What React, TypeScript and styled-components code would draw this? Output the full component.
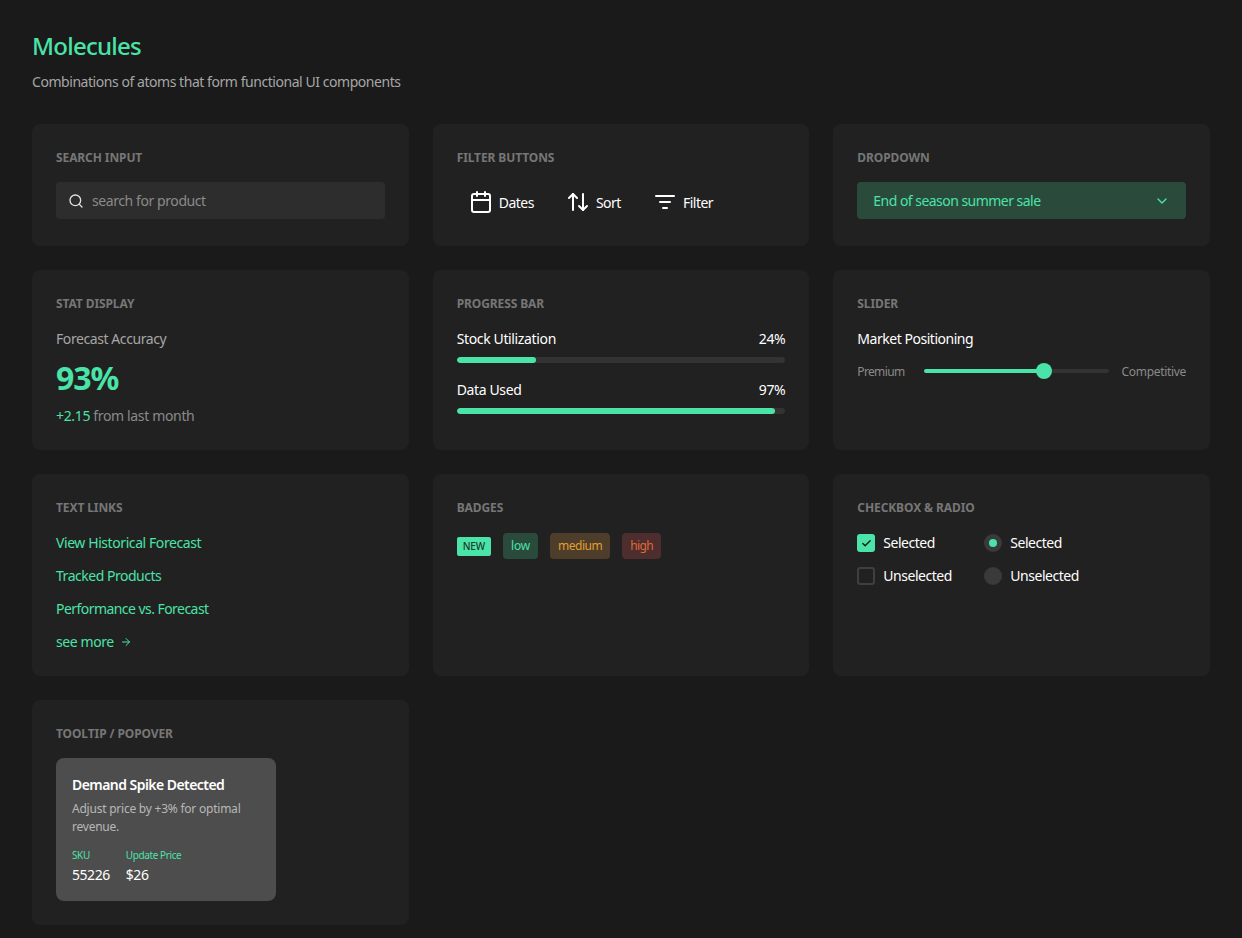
import React from "react";
import styled, { createGlobalStyle } from "styled-components";
import { Search, Calendar, ArrowUpDown, ChevronDown, ArrowRight, Check } from "lucide-react";

const Global = createGlobalStyle`
  html, body { margin: 0; padding: 0; background: #1a1a1a; overflow: hidden; height: 938px; }
  body { font-family: "Noto Sans", "Open Sans", sans-serif; color: #fff; }
`;
const Page = styled.div`padding: 32px;`;
const Title = styled.h1`margin: 0 0 10px; font-size: 24px; line-height: 28px; padding-bottom: 1px; font-weight: 500; color: #4ae3a8; letter-spacing: -0.75px;`;
const Subtitle = styled.p`margin: 0 0 31px; font-size: 14px; line-height: 22px; color: #a6a6a6; letter-spacing: -0.45px;`;
const Grid = styled.div`display: grid; grid-template-columns: repeat(3, 1fr); gap: 24px;`;
const Card = styled.section`background: #212121; border-radius: 8px; padding: 24px;`;
const Label = styled.h3`margin: 0 0 14px; font-size: 12px; line-height: 20px; font-weight: 700; color: #767676; text-transform: uppercase; letter-spacing: -0.1px;`;
const SearchBox = styled.div`display: flex; align-items: center; gap: 8px; height: 37px; padding: 0 12px; background: #2d2d2d; border-radius: 4px; color: #e0e0e0;`;
const Placeholder = styled.span`font-size: 14px; color: #8a8a8a; letter-spacing: -0.42px;`;
const FilterRow = styled.div`display: flex; gap: 8px;`;
const FilterBtn = styled.div`display: flex; align-items: center; gap: 6px; padding: 8px 12px; font-size: 14px; line-height: 20px; color: #fff; letter-spacing: -0.5px;`;
const FilterText = styled.span`padding-top: 2px;`;
const Select = styled.div`display: flex; align-items: center; justify-content: space-between; height: 37px; padding: 0 16px; background: #2a4a3c; border-radius: 4px; color: #4ae3a8; font-size: 14px; letter-spacing: -0.53px;`;
const StatLabel = styled.div`font-size: 14px; line-height: 22px; color: #a6a6a6; letter-spacing: -0.42px;`;
const StatValue = styled.div`margin: 8px 0; font-size: 32px; line-height: 40px; font-weight: 700; color: #4ae3a8; letter-spacing: -1px;`;
const StatDelta = styled.div`font-size: 14px; line-height: 20px; color: #8a8a8a; letter-spacing: -0.35px; span { color: #4ae3a8; }`;
const ProgressItem = styled.div`& + & { margin-top: 16px; }`;
const ProgressHead = styled.div`display: flex; justify-content: space-between; font-size: 14px; line-height: 22px; letter-spacing: -0.36px; margin-bottom: 7px;`;
const Track = styled.div`height: 6px; background: #333; border-radius: 3px; overflow: hidden;`;
const Fill = styled.div`height: 100%; background: #4ae3a8; border-radius: 3px;`;
const SliderTitle = styled.div`font-size: 14px; line-height: 22px; letter-spacing: -0.47px; margin-bottom: 12px;`;
const SliderRow = styled.div`display: flex; align-items: center; font-size: 12px; line-height: 20px; color: #8a8a8a;`;
const SliderStart = styled.span`letter-spacing: -0.65px; margin-right: 20px;`;
const SliderEnd = styled.span`letter-spacing: -0.32px; margin-left: 13px;`;
const SliderTrack = styled.div`position: relative; flex: 1; height: 4px; border-radius: 2px; background: #333; top: -1px;`;
const SliderFill = styled.div`height: 100%; background: #4ae3a8; border-radius: 2px;`;
const Thumb = styled.div`position: absolute; top: -6px; width: 16px; height: 16px; margin-left: -8px; border-radius: 50%; background: #4ae3a8;`;
const Links = styled.div`display: flex; flex-direction: column; gap: 13px; padding-top: 1px;`;
const TextLink = styled.a<{ $ls?: number }>`display: flex; align-items: center; gap: 6px; font-size: 14px; line-height: 20px; color: #4ae3a8; letter-spacing: ${p => p.$ls ?? -0.42}px;`;
const Badges = styled.div`display: flex; align-items: center; gap: 12px; padding-top: 1px;`;
const New = styled.span`padding: 0 6px; height: 19px; line-height: 19px; background: #4ae3a8; color: #1a3a2c; font-size: 10px; font-weight: 500; border-radius: 2px; letter-spacing: -0.1px;`;
const Badge = styled.span<{ $bg: string; $fg: string; $ls: number }>`height: 26px; line-height: 26px; padding: 0 8px; border-radius: 4px; font-size: 12px; background: ${p => p.$bg}; color: ${p => p.$fg}; letter-spacing: ${p => p.$ls}px;`;
const Choices = styled.div`display: grid; grid-template-columns: 127px auto; row-gap: 13px; justify-content: start; padding-top: 1px;`;
const Choice = styled.div`display: flex; align-items: center; gap: 8px; font-size: 14px; line-height: 20px; letter-spacing: -0.47px;`;
const Box = styled.span<{ $on?: boolean }>`display: flex; align-items: center; justify-content: center; box-sizing: border-box; width: 18px; height: 18px; border-radius: 3px; color: #1a1a1a; background: ${p => (p.$on ? "#4ae3a8" : "transparent")}; border: ${p => (p.$on ? "none" : "2px solid #3f3f3f")};`;
const Radio = styled.span<{ $on?: boolean }>`display: flex; align-items: center; justify-content: center; width: 18px; height: 18px; border-radius: 50%; background: #3a3a3a; &::after { content: ""; width: 8px; height: 8px; border-radius: 50%; background: ${p => (p.$on ? "#4ae3a8" : "transparent")}; }`;
const Pop = styled.div`width: 220px; box-sizing: border-box; padding: 16px 16px 15px; background: #4d4d4d; border-radius: 8px;`;
const PopTitle = styled.div`font-size: 14px; line-height: 22px; font-weight: 600; color: #fff; letter-spacing: -0.55px; margin-bottom: 4px;`;
const PopText = styled.div`font-size: 12px; line-height: 18px; color: #b8b8b8; letter-spacing: -0.23px; margin-bottom: 10px;`;
const PopFields = styled.div`display: flex; gap: 16px;`;
const PopKey = styled.div`font-size: 10px; line-height: 18px; color: #4ae3a8; letter-spacing: -0.4px;`;
const PopVal = styled.div`font-size: 14px; line-height: 22px; color: #fff; letter-spacing: -0.45px;`;

const FilterLines = () => (
  <svg width="24" height="24" viewBox="0 0 24 24" fill="none" stroke="currentColor" strokeWidth="2" strokeLinecap="round">
    <path d="M3 6h18M7 12h10M10 18h4" />
  </svg>
);

export default function App() {
  return (
    <Page>
      <Global />
      <Title>Molecules</Title>
      <Subtitle>Combinations of atoms that form functional UI components</Subtitle>
      <Grid>
        <Card>
          <Label>Search Input</Label>
          <SearchBox><Search size={16} /><Placeholder>search for product</Placeholder></SearchBox>
        </Card>
        <Card>
          <Label>Filter Buttons</Label>
          <FilterRow>
            <FilterBtn><Calendar size={24} strokeWidth={2} /><FilterText>Dates</FilterText></FilterBtn>
            <FilterBtn><ArrowUpDown size={24} strokeWidth={2} /><FilterText>Sort</FilterText></FilterBtn>
            <FilterBtn><FilterLines /><FilterText>Filter</FilterText></FilterBtn>
          </FilterRow>
        </Card>
        <Card>
          <Label>Dropdown</Label>
          <Select>End of season summer sale<ChevronDown size={16} /></Select>
        </Card>
        <Card>
          <Label>Stat Display</Label>
          <StatLabel>Forecast Accuracy</StatLabel>
          <StatValue>93%</StatValue>
          <StatDelta><span>+2.15</span> from last month</StatDelta>
        </Card>
        <Card>
          <Label>Progress Bar</Label>
          <ProgressItem>
            <ProgressHead><span>Stock Utilization</span><span>24%</span></ProgressHead>
            <Track><Fill style={{ width: "24%" }} /></Track>
          </ProgressItem>
          <ProgressItem>
            <ProgressHead><span>Data Used</span><span>97%</span></ProgressHead>
            <Track><Fill style={{ width: "97%" }} /></Track>
          </ProgressItem>
        </Card>
        <Card>
          <Label>Slider</Label>
          <SliderTitle>Market Positioning</SliderTitle>
          <SliderRow>
            <SliderStart>Premium</SliderStart>
            <SliderTrack><SliderFill style={{ width: "65%" }} /><Thumb style={{ left: "65%" }} /></SliderTrack>
            <SliderEnd>Competitive</SliderEnd>
          </SliderRow>
        </Card>
        <Card>
          <Label>Text Links</Label>
          <Links>
            <TextLink>View Historical Forecast</TextLink>
            <TextLink $ls={-0.48}>Tracked Products</TextLink>
            <TextLink $ls={-0.55}>Performance vs. Forecast</TextLink>
            <TextLink>see more <ArrowRight size={12} /></TextLink>
          </Links>
        </Card>
        <Card>
          <Label>Badges</Label>
          <Badges>
            <New>NEW</New>
            <Badge $bg="#2a4a3c" $fg="#4ae3a8" $ls={-0.2}>low</Badge>
            <Badge $bg="#4d3d2a" $fg="#e0a030" $ls={-0.5}>medium</Badge>
            <Badge $bg="#4d2d2d" $fg="#e06a35" $ls={-0.6}>high</Badge>
          </Badges>
        </Card>
        <Card>
          <Label>Checkbox &amp; Radio</Label>
          <Choices>
            <Choice><Box $on><Check size={11} strokeWidth={3} /></Box>Selected</Choice>
            <Choice><Radio $on />Selected</Choice>
            <Choice><Box />Unselected</Choice>
            <Choice><Radio />Unselected</Choice>
          </Choices>
        </Card>
        <Card>
          <Label>Tooltip / Popover</Label>
          <Pop>
            <PopTitle>Demand Spike Detected</PopTitle>
            <PopText>Adjust price by +3% for optimal revenue.</PopText>
            <PopFields>
              <div><PopKey>SKU</PopKey><PopVal>55226</PopVal></div>
              <div><PopKey>Update Price</PopKey><PopVal>$26</PopVal></div>
            </PopFields>
          </Pop>
        </Card>
      </Grid>
    </Page>
  );
}
